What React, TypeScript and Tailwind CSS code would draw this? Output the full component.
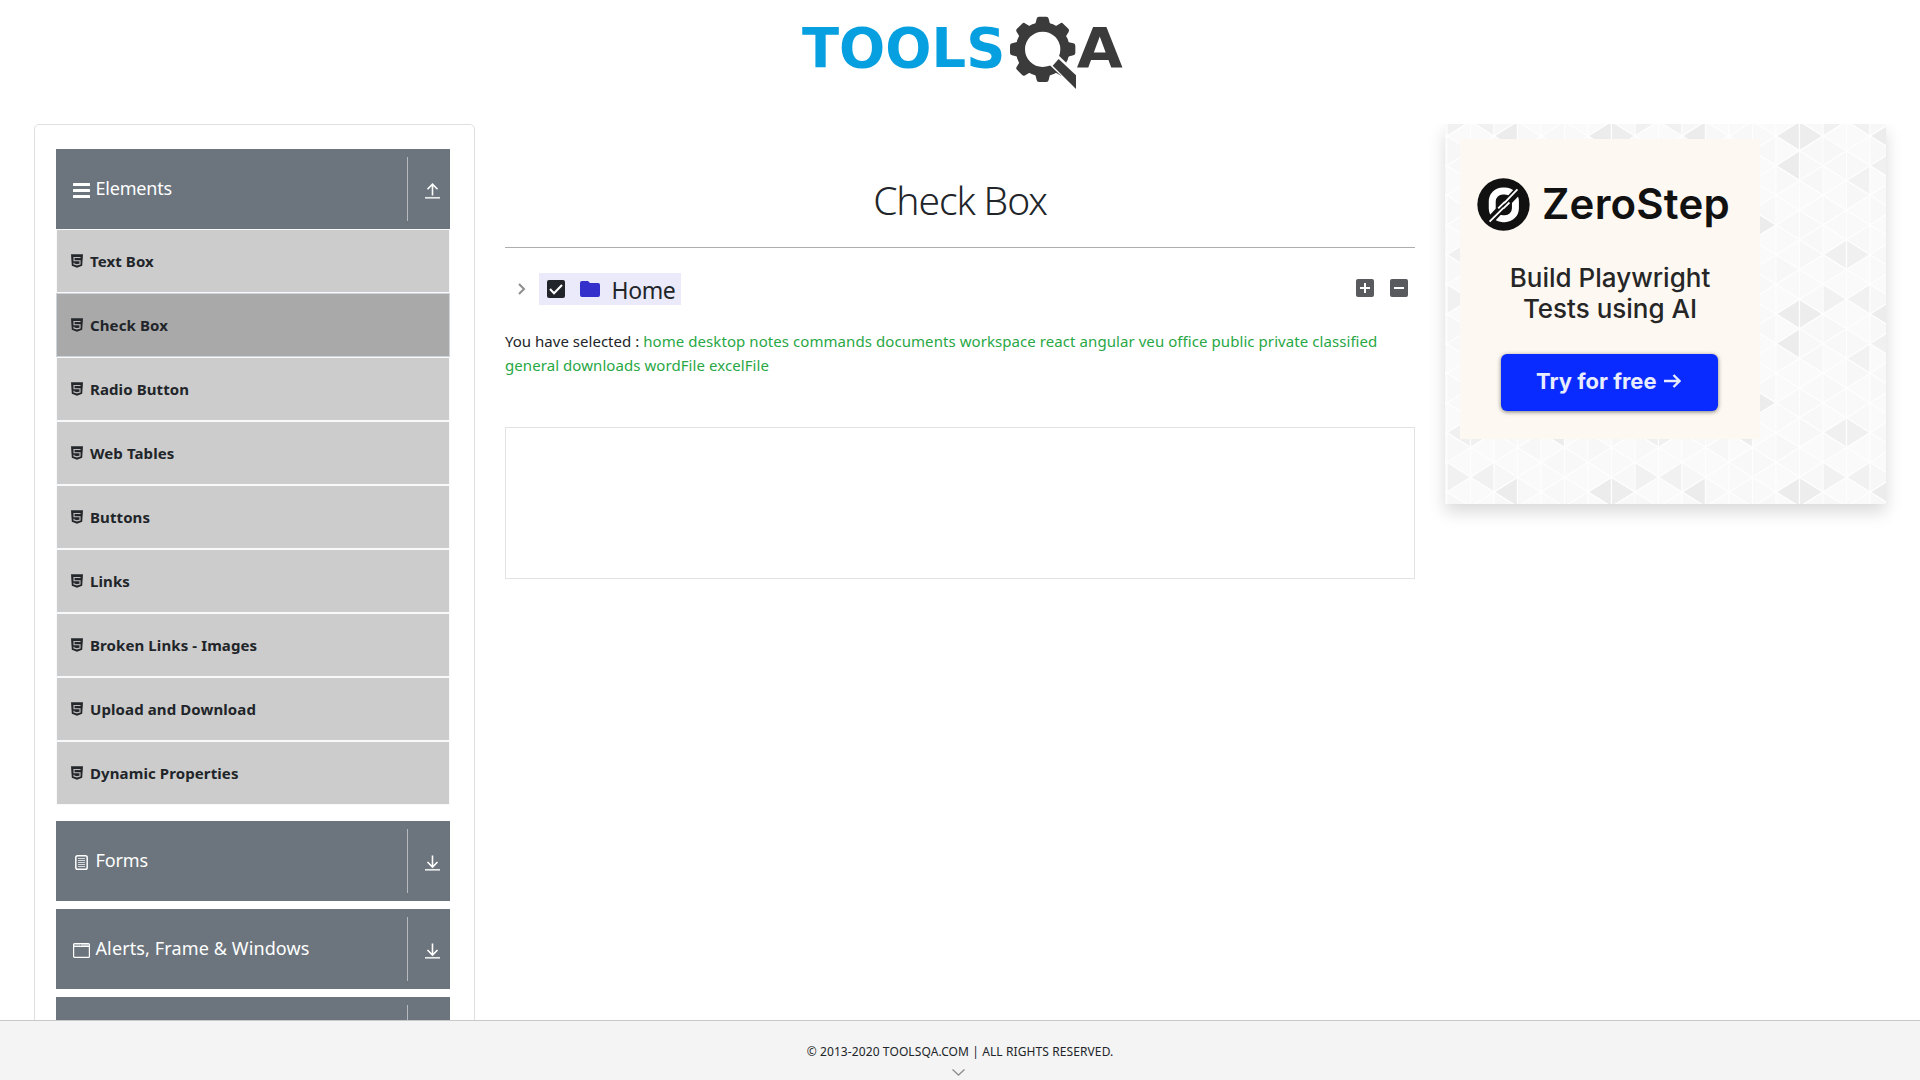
import React from "react";

const items = ["Text Box", "Check Box", "Radio Button", "Web Tables", "Buttons", "Links", "Broken Links - Images", "Upload and Download", "Dynamic Properties"];

function Html5() {
  return (
    <svg viewBox="0 0 12 14" className="h-[14px] w-3 shrink-0">
      <path d="M0 .3h12l-.8 11.5L6 13.700l-5.200-1.900z" fill="#24282c" />
      <path d="M9.500 3.500H3v3.200h6v3.300l-3 .9-3-.9V8.800" fill="none" stroke="#bdbdbd" strokeWidth="1.1" />
    </svg>
  );
}

function Arrow({ up }: { up?: boolean }) {
  return (
    <svg viewBox="0 0 15 16" className="mt-[4px] h-4 w-[15px]" fill="none" stroke="#fff">
      <path d={up ? "M7.5 12.5V1M2.5 6.2l5-5 5 5" : "M7.5 .5V12M2.5 7l5 5 5-5"} strokeWidth="1.6" />
      <path d="M0 14.8h15" strokeWidth="1.7" stroke="#e6e8ea" />
    </svg>
  );
}

function Bars() {
  return (
    <svg viewBox="0 0 17 15" className="h-[15px] w-[17px]" fill="#fff">
      <rect width="17" height="3" rx=".5" />
      <rect y="6" width="17" height="3" rx=".5" />
      <rect y="12" width="17" height="3" rx=".5" />
    </svg>
  );
}

function FormIcon() {
  return (
    <svg viewBox="0 0 17 15" className="h-[15px] w-[17px]" fill="none" stroke="#fff">
      <rect x="2.8" y=".8" width="11.4" height="13.4" rx="1.8" strokeWidth="1.5" />
      <path d="M5 3.5h7M5 5.5h7M5 7.5h7M5 9.5h7M5 11.5h7" stroke="#d5d9dc" strokeWidth="1" />
    </svg>
  );
}

function WindowIcon() {
  return (
    <svg viewBox="0 0 17 15" className="h-[15px] w-[17px]" fill="none" stroke="#fff">
      <rect x=".6" y=".6" width="15.8" height="13.8" rx="1" strokeWidth="1.2" />
      <path d="M1 2h15" strokeWidth="2" stroke="#c5cacf" strokeDasharray="1.5 .7 1.5 .7 1.5 .7 20" />
      <path d="M.5 3.5h16" strokeWidth="1" />
    </svg>
  );
}

function Group({ title, icon, up, tracking = "" }: { title: string; icon?: React.ReactNode; up?: boolean; tracking?: string }) {
  return (
    <div className="flex h-20 shrink-0 items-center bg-[#6c757d] pl-[17px] text-[18px] text-white">
      <span className="mt-[3px]">{icon}</span>
      <span className={`ml-[5.5px] flex-1 pb-[2px] ${tracking}`}>{title}</span>
      <span className="flex h-16 w-[43px] items-center border-l border-[#b6babe] pl-[17px]"><Arrow up={up} /></span>
    </div>
  );
}

function Logo() {
  return (
    <svg viewBox="0 0 1050 285" className="ml-[790px] mt-[5px] h-[95px] w-[350px]">
      <text x="36" y="185" textLength="610" lengthAdjust="spacingAndGlyphs" fontSize="165" className="font-['DejaVu_Sans'] font-bold" fill="#069fe0">TOOLS</text>
      <g transform="translate(758 133)" fill="#3b3b3b">
        {[0, 45, 90, 135, 180, 225, 270, 315].map((a) => (
          <path key={a} transform={`rotate(${a})`} d="M-23-72L-18-92Q-17-98-11-98H11Q17-98 18-92L23-72z" />
        ))}
        <circle r="67" fill="none" stroke="#3b3b3b" strokeWidth="28" />
      </g>
      <path d="M775 176L802 148L880 222V275z" fill="#fff" />
      <path d="M788 182L806 162L858 211V252z" fill="#3b3b3b" />
      <text x="860" y="185" textLength="138" lengthAdjust="spacingAndGlyphs" fontSize="165" className="font-['DejaVu_Sans'] font-bold" fill="#3b3b3b">A</text>
    </svg>
  );
}

const COL = 23.5;
const SIDE = 29.667;
const DARK: Record<string, string> = {
  "6L0": "#ebebeb", "7R0": "#ececec", "2L0": "#ebebeb", "6L1": "#ebebeb", "2L1": "#efefef",
  "1L1.5": "#f2f2f2", "5R3": "#ebebeb", "4L4": "#ebebeb", "0L4": "#f0f0f0", "1R4": "#f0f0f0",
  "0R5.5": "#f1f1f1", "1L5.5": "#f1f1f1",
};
const SHADES = ["#fbfbfb", "#f8f8f8", "#fafafa", "#f7f7f7", "#f9f9f9", "#fbfbfb", "#f8f8f8"];

function Triangles() {
  const out: React.ReactNode[] = [];
  for (let c = 0; c < 8; c++) {
    for (let h = 0; h < 12; h++) {
      const y = (h / 2) * SIDE;
      const left = (c + h) % 2 === 0;
      const key = `${c}${left ? "L" : "R"}${h / 2}`;
      const xa = c * COL;
      const xb = xa + COL;
      const pts = (dy: number) => left
        ? `${xa},${y + dy} ${xb},${y - SIDE / 2 + dy} ${xb},${y + SIDE / 2 + dy}`
        : `${xb},${y + dy} ${xa},${y - SIDE / 2 + dy} ${xa},${y + SIDE / 2 + dy}`;
      const fill = DARK[key] ?? SHADES[(c * 5 + h * 3 + ((c * h) % 4)) % 7];
      out.push(<polygon key={key} points={pts(0)} fill={fill} />);
      if (h === 0) out.push(<polygon key={key + "b"} points={pts(178)} fill={fill} />);
    }
  }
  return (
    <svg className="absolute inset-0 h-full w-full opacity-90">
      <defs>
        <pattern id="tri" x="2" y="12" width="188" height="178" patternUnits="userSpaceOnUse">
          <g stroke="#fff" strokeWidth="1.2" strokeLinejoin="round">{out}</g>
        </pattern>
      </defs>
      <rect width="100%" height="100%" fill="url(#tri)" />
    </svg>
  );
}

function Ad() {
  return (
    <div className="relative h-[380px] w-[441px] bg-[#fafafa] p-[15px] shadow-[0_8px_16px_rgba(0,0,0,0.15)]">
      <Triangles />
      <div className="relative h-[300px] w-[300px] bg-[#fdf8f2] pt-[38px] font-['Inter']">
        <div className="flex h-[54px] items-center pl-[17px]">
          <svg viewBox="0 0 160 160" className="h-[53px] w-[53px]">
            <circle cx="80" cy="80" r="79" fill="#111" />
            <rect x="46" y="39" width="70" height="84" rx="32" fill="none" stroke="#fff" strokeWidth="21" />
            <path d="M34 134L126 36" stroke="#111" strokeWidth="24" />
            <path d="M38 132L80 90M82 76L122 34M64 92L84 72M80 92L98 74" stroke="#fff" strokeWidth="5.5" fill="none" />
          </svg>
          <span className="ml-[12px] text-[42px] leading-none font-semibold tracking-[0.2px] whitespace-nowrap text-[#111]">ZeroStep</span>
        </div>
        <div className="mt-[31px] text-center text-[26px] leading-[31px] font-medium whitespace-nowrap text-[#262626]">
          Build Playwright<br />Tests using AI
        </div>
        <div className="mt-[30px] ml-[41px] flex h-[57px] w-[217px] items-center rounded-[6px] bg-[#0a2bff] pl-[35px] text-[22px] font-bold whitespace-nowrap text-[#e8ecff] shadow-[0_1px_4px_rgba(0,0,0,0.5)]">
          <span className="pb-[2px]">Try for free</span>
          <svg viewBox="0 0 17 14" className="mb-[3px] ml-[7px] h-[14px] w-[17px]" fill="none" stroke="#e8ecff" strokeWidth="2.4"><path d="M0 7h15.500M9.500 1l6 6-6 6" /></svg>
        </div>
      </div>
    </div>
  );
}

export default function App() {
  return (
    <div className="flex h-[1080px] w-[1920px] flex-col overflow-hidden bg-white font-['Noto_Sans',sans-serif] text-[#212529]">
      <header className="h-[124px] shrink-0 overflow-hidden"><Logo /></header>
      <main className="flex min-h-0 flex-1 items-start overflow-hidden pl-[34px]">
        <aside className="flex h-[1100px] w-[441px] shrink-0 flex-col rounded-[5px] border border-[#dfdfdf] pt-6 pr-6 pl-[21px]">
          <Group title="Elements" icon={<Bars />} up tracking="tracking-[-0.2px]" />
          <ul className="mb-4 text-[15px] font-bold tracking-[0.1px]">
            {items.map((t, i) => (
              <li key={t} className={i === 1 ? "flex h-16 items-center border border-[#ced4da] bg-[#a9a9a9] pl-[14px]" : "flex h-16 items-center border border-[#f8f9fa] bg-[#ccc] pl-[14px]"}>
                <span className="pb-px"><Html5 /></span><span className="ml-[7px]">{t}</span>
              </li>
            ))}
          </ul>
          <div className="flex flex-col gap-2">
            <Group title="Forms" icon={<FormIcon />} tracking="tracking-[-0.1px]" />
            <Group title="Alerts, Frame & Windows" icon={<WindowIcon />} tracking="tracking-[0.12px]" />
            <Group title="" />
          </div>
        </aside>
        <section className="ml-[30px] w-[910px] shrink-0">
          <h1 className="mt-[48px] h-[76px] border-b border-[#adadad] text-center text-[39px] leading-[56px] font-light tracking-[-1.1px]">Check Box</h1>
          <div className="mt-[25px] flex h-8 items-center">
            <svg viewBox="0 0 8 12" className="ml-[13px] h-3 w-2" fill="none" stroke="#8c8e90" strokeWidth="2"><path d="M1 1l5 5-5 5" /></svg>
            <div className="ml-[13px] flex h-8 w-[142px] items-center bg-[#ebeafa] pl-2">
              <svg viewBox="0 0 18 18" className="h-[18px] w-[18px]"><rect width="18" height="18" rx="2" fill="#212529" /><path d="M3 9l4 4.2 8-8.2" fill="none" stroke="#fff" strokeWidth="2" /></svg>
              <svg viewBox="0 0 20 16" className="ml-[15px] h-4 w-5"><path d="M2 0h6l2 2h8a2 2 0 012 2v10a2 2 0 01-2 2H2a2 2 0 01-2-2V2a2 2 0 012-2z" fill="#3430cb" /></svg>
              <span className="ml-[11.500px] pt-[2px] text-[23px] leading-[30px] tracking-[-0.4px]">Home</span>
            </div>
            <div className="mr-[7px] mb-[2px] ml-auto flex gap-4">
              <svg viewBox="0 0 18 18" className="h-[18px] w-[18px]"><rect width="18" height="18" rx="2" fill="#585a5e" /><path d="M4 9h10M9 4v10" stroke="#fff" strokeWidth="2" /></svg>
              <svg viewBox="0 0 18 18" className="h-[18px] w-[18px]"><rect width="18" height="18" rx="2" fill="#585a5e" /><path d="M4 9h10" stroke="#fff" strokeWidth="2" /></svg>
            </div>
          </div>
          <div className="mt-[24px] text-[15px] leading-6 tracking-[0.07px] whitespace-nowrap">
            <span className="tracking-[0.02px]">You have selected : </span>
            <span className="text-[#28a745]">home desktop notes commands documents workspace react angular veu office public private classified<br />general downloads wordFile excelFile</span>
          </div>
          <div className="mt-[50px] h-[152px] border border-[#e3e3e3]" />
        </section>
        <div className="ml-[30px]"><Ad /></div>
      </main>
      <footer className="flex h-[60px] shrink-0 flex-col items-center border-t border-[#c8caca] bg-[#f4f4f4] pt-[21px]">
        <span className="text-[12px] leading-5 tracking-[0.1px]">© 2013-2020 TOOLSQA.COM | ALL RIGHTS RESERVED.</span>
        <svg viewBox="0 0 13 7" className="mt-[7px] mr-[3px] h-[7px] w-[13px]" fill="none" stroke="#8e8e8e" strokeWidth="1.3"><path d="M.5 .5l6 5.500 6-5.500" /></svg>
      </footer>
    </div>
  );
}
